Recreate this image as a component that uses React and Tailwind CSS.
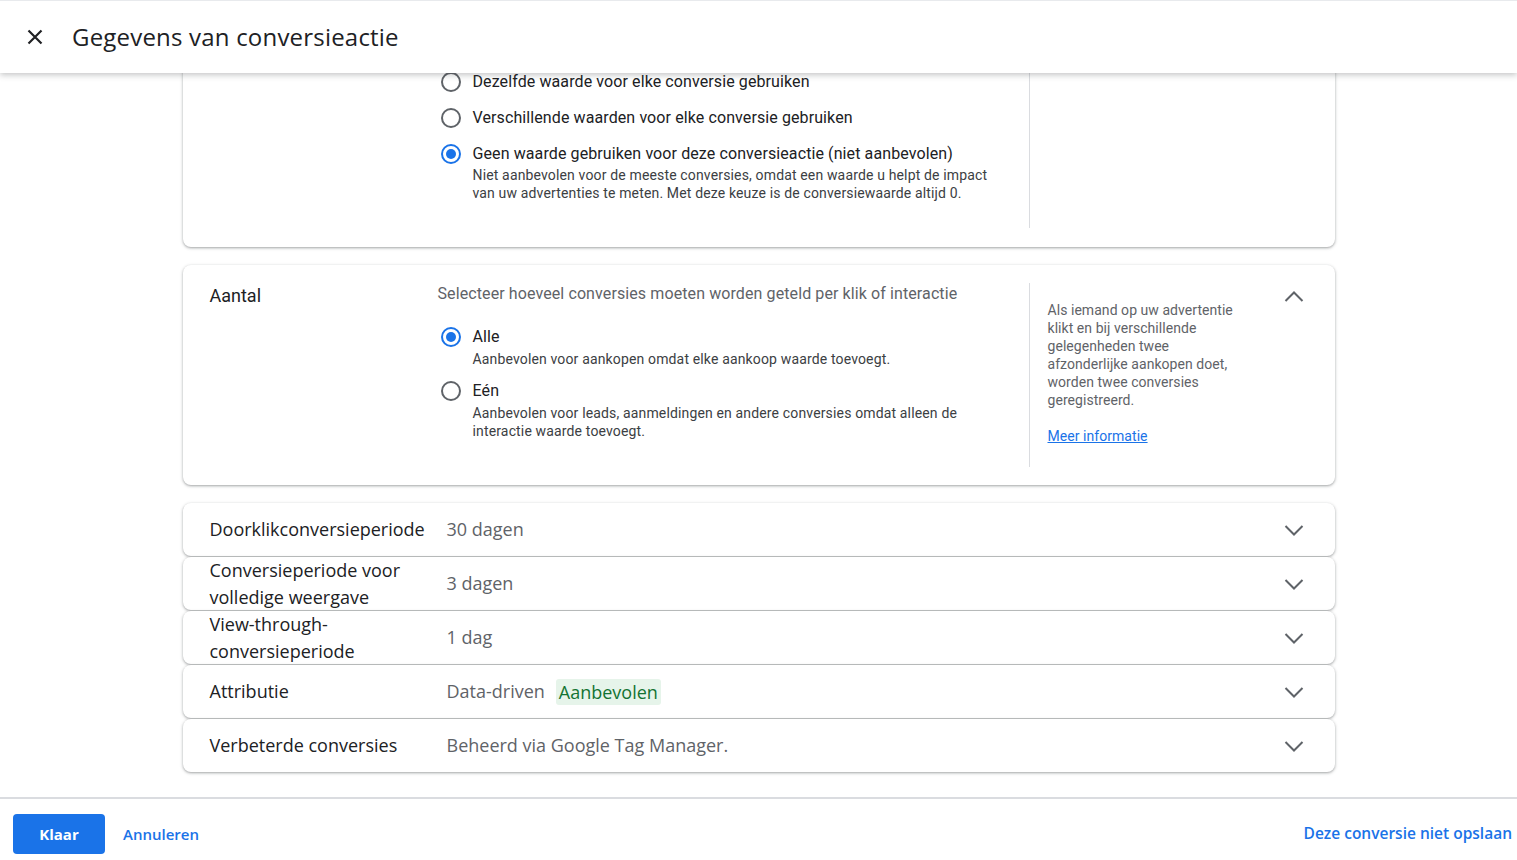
import React from "react";

const gsans = { fontFamily: "'Open Sans', Roboto, sans-serif" };

const Radio = ({ checked }) => (
  <span
    className={
      "mt-[2px] flex h-[20px] w-[20px] shrink-0 items-center justify-center rounded-full border-2 " +
      (checked ? "border-[#1a73e8]" : "border-[#5f6368]")
    }
  >
    {checked && <span className="h-[10px] w-[10px] rounded-full bg-[#1a73e8]" />}
  </span>
);

const Option = ({ checked, label, desc, descGap }) => (
  <div className="flex gap-[12px] pl-[3px]">
    <Radio checked={checked} />
    <div>
      <div className="text-[16px] leading-[24px] tracking-[0.1px] text-[#202124]">{label}</div>
      {desc && (
        <div
          className={
            "text-[14px] leading-[18px] tracking-[0.15px] text-[#3c4043] " +
            (descGap ? "mt-[1px]" : "")
          }
        >
          {desc}
        </div>
      )}
    </div>
  </div>
);

const Chevron = ({ up, className = "" }) => (
  <svg width="24" height="24" viewBox="0 0 24 24" className={"shrink-0 " + className}>
    <path
      d={up ? "M3.5 16l8.5-8.5 8.5 8.5" : "M3.5 8l8.5 8.5 8.5-8.5"}
      fill="none"
      stroke="#5f6368"
      strokeWidth="2"
    />
  </svg>
);

const rows = [
  { label: "Doorklikconversieperiode", value: "30 dagen" },
  { label: "Conversieperiode voor volledige weergave", value: "3 dagen" },
  { label: "View-through-conversieperiode", value: "1 dag" },
  { label: "Attributie", value: "Data-driven", chip: "Aanbevolen" },
  { label: "Verbeterde conversies", value: "Beheerd via Google Tag Manager." },
];

const card =
  "bg-white rounded-[8px] shadow-[0_1px_2px_rgba(60,64,67,0.3),0_1px_3px_1px_rgba(60,64,67,0.15)]";

export default function App() {
  return (
    <div
      className="flex h-screen flex-col overflow-hidden bg-white"
      style={{ fontFamily: "Roboto, 'Noto Sans', sans-serif" }}
    >
      {/* Header */}
      <header className="relative z-10 flex h-[73px] shrink-0 items-center border-t border-[#e8eaed] bg-white shadow-[0_2px_6px_rgba(60,64,67,0.3)]">
        <button className="ml-[23px] flex h-[24px] w-[24px] items-center justify-center">
          <svg width="24" height="24" viewBox="0 0 24 24">
            <path d="M5.5 5.5l13 13M18.5 5.5l-13 13" stroke="#202124" strokeWidth="2.2" />
          </svg>
        </button>
        <h1
          className="ml-[25px] -mt-[1px] text-[24px] leading-[32px] tracking-[0.2px] text-[#202124]"
          style={gsans}
        >
          Gegevens van conversieactie
        </h1>
      </header>

      {/* Content */}
      <main className="flex-1 overflow-hidden">
        <div className="mx-auto flex w-[1152px] flex-col">
          {/* Waarde card (scrolled) */}
          <div className={card + " -mt-[19px] flex pb-[19px]"}>
            <div className="w-[255px] shrink-0" />
            <div className="flex flex-1 flex-col gap-[12px] pt-[16px] pb-[26px]">
              <Option label="Dezelfde waarde voor elke conversie gebruiken" />
              <Option label="Verschillende waarden voor elke conversie gebruiken" />
              <Option
                checked
                label="Geen waarde gebruiken voor deze conversieactie (niet aanbevolen)"
                desc={
                  <>
                    Niet aanbevolen voor de meeste conversies, omdat een waarde u helpt de impact
                    <br />
                    van uw advertenties te meten. Met deze keuze is de conversiewaarde altijd 0.
                  </>
                }
              />
            </div>
            <div className="w-[306px] shrink-0 border-l border-[#dadce0]" />
          </div>

          {/* Aantal card */}
          <div className={card + " mt-[18px] flex py-[18px]"}>
            <div className="w-[255px] shrink-0 pl-[27px] pt-[1px] text-[18px] leading-[24px] text-[#202124]">
              Aantal
            </div>
            <div className="flex flex-1 flex-col">
              <div className="-mt-[1px] text-[16px] leading-[24px] tracking-[0.1px] text-[#5f6368]">
                Selecteer hoeveel conversies moeten worden geteld per klik of interactie
              </div>
              <div className="mt-[19px] flex flex-col gap-[11px] pr-[50px]">
                <Option
                  checked
                  descGap
                  label="Alle"
                  desc="Aanbevolen voor aankopen omdat elke aankoop waarde toevoegt."
                />
                <Option
                  descGap
                  label="Eén"
                  desc="Aanbevolen voor leads, aanmeldingen en andere conversies omdat alleen de interactie waarde toevoegt."
                />
              </div>
            </div>
            <div className="flex h-[184px] w-[306px] shrink-0 justify-between border-l border-[#dadce0] pl-[18px] pr-[29px]">
              <div className="w-[195px] pt-[18px] text-[14px] leading-[18px] tracking-[0.05px] text-[#5f6368]">
                <p>
                  Als iemand op uw advertentie klikt en bij verschillende gelegenheden twee
                  afzonderlijke aankopen doet, worden twee conversies geregistreerd.
                </p>
                <a href="#" className="mt-[18px] block text-[#1a73e8] underline">
                  Meer informatie
                </a>
              </div>
              <Chevron up className="mt-[2px]" />
            </div>
          </div>

          {/* Collapsed rows */}
          <div className="mt-[18px] flex flex-col gap-px" style={gsans}>
            {rows.map((r) => (
              <div key={r.label} className={card + " flex h-[53px] items-center pl-[27px] pr-[29px]"}>
                <div className="w-[237px] shrink-0 text-[18px] leading-[27px] text-[#202124]">
                  {r.label}
                </div>
                <div className="flex flex-1 items-center gap-[11px] text-[18px] text-[#5f6368]">
                  <span>{r.value}</span>
                  {r.chip && (
                    <span className="rounded-[3px] bg-[#e6f4ea] px-[3px] leading-[26px] text-[#137333]">
                      {r.chip}
                    </span>
                  )}
                </div>
                <Chevron />
              </div>
            ))}
          </div>
        </div>
      </main>

      {/* Footer */}
      <footer
        className="flex h-[63px] shrink-0 items-start border-t-2 border-[#dadce0] pt-[15px] pl-[13px] pr-[5px]"
        style={gsans}
      >
        <button className="h-[40px] w-[92px] rounded-[4px] bg-[#1a73e8] text-[15px] font-bold text-white">
          Klaar
        </button>
        <button className="ml-[18px] h-[40px] text-[15px] font-semibold text-[#1a73e8]">
          Annuleren
        </button>
        <button className="ml-auto h-[40px] text-[15.5px] font-semibold text-[#1a73e8]">
          Deze conversie niet opslaan
        </button>
      </footer>
    </div>
  );
}
